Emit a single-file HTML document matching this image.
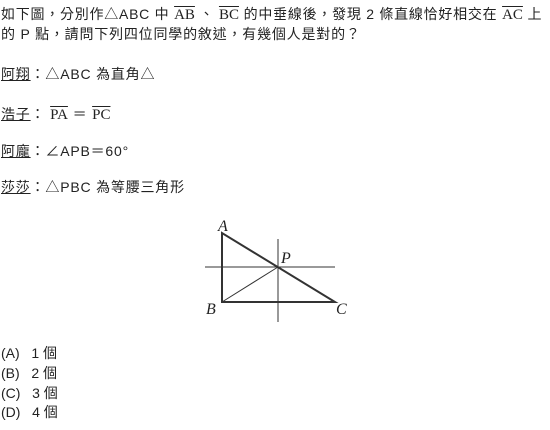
<html><head><style>
body{margin:0;width:550px;height:430px;background:#fff;position:relative;font-family:"Liberation Sans","Noto Sans CJK TC",sans-serif;font-size:14px;color:#222;}
.l{position:absolute;left:1px;white-space:nowrap;line-height:18px;letter-spacing:0.8px}
.s{font-family:"Liberation Serif",serif;text-decoration:overline;font-size:15px;letter-spacing:0}
u{text-decoration:underline;}
.o{letter-spacing:0}
</style></head><body>
<div class="l" style="top:5px;letter-spacing:0.75px">如下圖，分別作△ABC 中 <span class="s">AB</span> 、 <span class="s">BC</span> 的中垂線後，發現 2 條直線恰好相交在 <span class="s">AC</span> 上</div>
<div class="l" style="top:25px">的 P 點，請問下列四位同學的敘述，有幾個人是對的？</div>
<div class="l" style="top:65px"><u>阿翔</u>：△ABC 為直角△</div>
<div class="l" style="top:105px"><u>浩子</u>： <span class="s">PA</span> ＝ <span class="s">PC</span></div>
<div class="l" style="top:142px"><u>阿龐</u>：∠APB＝60°</div>
<div class="l" style="top:178px"><u>莎莎</u>：△PBC 為等腰三角形</div>
<svg style="position:absolute;left:0;top:0" width="550" height="430">
<g stroke="#333" fill="none">
<path d="M222 233V302H335Z" stroke-width="2"/>
<path d="M205 267H335M278 239V322M222 302L278 267" stroke-width="1"/>
</g>
<g font-family="Liberation Serif" font-style="italic" font-size="16" fill="#222">
<text x="218" y="231">A</text><text x="281" y="263">P</text><text x="206" y="314">B</text><text x="336" y="314">C</text>
</g></svg>
<div class="l o" style="top:344px">(A)&nbsp;&nbsp; 1 個</div>
<div class="l o" style="top:364px">(B)&nbsp;&nbsp; 2 個</div>
<div class="l o" style="top:384px">(C)&nbsp;&nbsp; 3 個</div>
<div class="l o" style="top:403px">(D)&nbsp;&nbsp; 4 個</div>
</body></html>
